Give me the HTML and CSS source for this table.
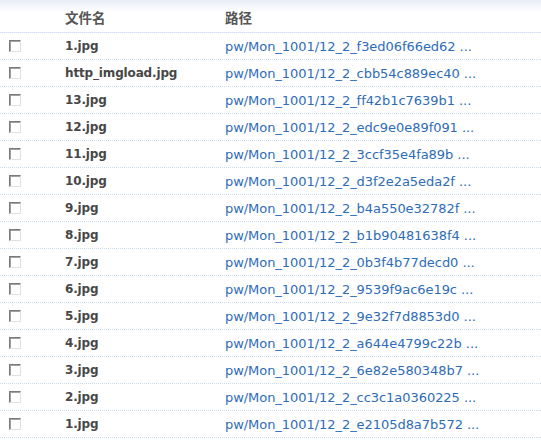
FILE: index.html
```html
<!DOCTYPE html>
<html>
<head>
<meta charset="utf-8">
<link rel="stylesheet" href="styles.css">
</head>
<body>
<div class="grid">
  <div class="row head">
    <div class="cell"></div>
    <div class="cell hname">文件名</div>
    <div class="cell hname">路径</div>
  </div>
  <div class="row"><div class="cell"><span class="cb"></span></div><div class="cell name">1.jpg</div><div class="cell path">pw/Mon_1001/12_2_f3ed06f66ed62 ...</div></div>
  <div class="row"><div class="cell"><span class="cb"></span></div><div class="cell name">http_imgload.jpg</div><div class="cell path">pw/Mon_1001/12_2_cbb54c889ec40 ...</div></div>
  <div class="row"><div class="cell"><span class="cb"></span></div><div class="cell name">13.jpg</div><div class="cell path">pw/Mon_1001/12_2_ff42b1c7639b1 ...</div></div>
  <div class="row"><div class="cell"><span class="cb"></span></div><div class="cell name">12.jpg</div><div class="cell path">pw/Mon_1001/12_2_edc9e0e89f091 ...</div></div>
  <div class="row"><div class="cell"><span class="cb"></span></div><div class="cell name">11.jpg</div><div class="cell path">pw/Mon_1001/12_2_3ccf35e4fa89b ...</div></div>
  <div class="row"><div class="cell"><span class="cb"></span></div><div class="cell name">10.jpg</div><div class="cell path">pw/Mon_1001/12_2_d3f2e2a5eda2f ...</div></div>
  <div class="row"><div class="cell"><span class="cb"></span></div><div class="cell name">9.jpg</div><div class="cell path">pw/Mon_1001/12_2_b4a550e32782f ...</div></div>
  <div class="row"><div class="cell"><span class="cb"></span></div><div class="cell name">8.jpg</div><div class="cell path">pw/Mon_1001/12_2_b1b90481638f4 ...</div></div>
  <div class="row"><div class="cell"><span class="cb"></span></div><div class="cell name">7.jpg</div><div class="cell path">pw/Mon_1001/12_2_0b3f4b77decd0 ...</div></div>
  <div class="row"><div class="cell"><span class="cb"></span></div><div class="cell name">6.jpg</div><div class="cell path">pw/Mon_1001/12_2_9539f9ac6e19c ...</div></div>
  <div class="row"><div class="cell"><span class="cb"></span></div><div class="cell name">5.jpg</div><div class="cell path">pw/Mon_1001/12_2_9e32f7d8853d0 ...</div></div>
  <div class="row"><div class="cell"><span class="cb"></span></div><div class="cell name">4.jpg</div><div class="cell path">pw/Mon_1001/12_2_a644e4799c22b ...</div></div>
  <div class="row"><div class="cell"><span class="cb"></span></div><div class="cell name">3.jpg</div><div class="cell path">pw/Mon_1001/12_2_6e82e580348b7 ...</div></div>
  <div class="row"><div class="cell"><span class="cb"></span></div><div class="cell name">2.jpg</div><div class="cell path">pw/Mon_1001/12_2_cc3c1a0360225 ...</div></div>
  <div class="row"><div class="cell"><span class="cb"></span></div><div class="cell name">1.jpg</div><div class="cell path">pw/Mon_1001/12_2_e2105d8a7b572 ...</div></div>
</div>
</body>
</html>
```
FILE: styles.css
```css
html, body {
  margin: 0;
  padding: 0;
  background: #fff;
}
body {
  font-family: "DejaVu Sans", "Noto Sans CJK SC", sans-serif;
  width: 541px;
  height: 441px;
  overflow: hidden;
}
.grid {
  display: flex;
  flex-direction: column;
}
.row {
  display: grid;
  grid-template-columns: 65px 160px 1fr;
  height: 26px;
  align-items: center;
  border-bottom: 1px dotted #c9ddef;
}
.row.head {
  height: 32px;
  background: linear-gradient(to bottom, #e6eef7 0px, #f4f7fb 6px, #ffffff 13px);
}
.cell {
  white-space: nowrap;
  overflow: hidden;
}
.hname {
  font-family: "Noto Sans CJK SC", "DejaVu Sans", sans-serif;
  font-weight: bold;
  font-size: 13.5px;
  color: #555;
  padding-top: 1px;
}
.cb {
  display: block;
  width: 12px;
  height: 12px;
  margin-left: 9px;
  box-sizing: border-box;
  border-top: 1px solid #7a7a7a;
  border-left: 1px solid #7a7a7a;
  border-right: 1px solid #e0e0e0;
  border-bottom: 1px solid #e0e0e0;
  box-shadow: inset 1px 1px 0 #a0a0a0;
  background: #fff;
}
.name {
  font-weight: bold;
  font-size: 12px;
  letter-spacing: -0.15px;
  color: #474747;
}
.path {
  font-size: 13px;
  color: #2e6cb8;
  letter-spacing: -0.05px;
}
```
